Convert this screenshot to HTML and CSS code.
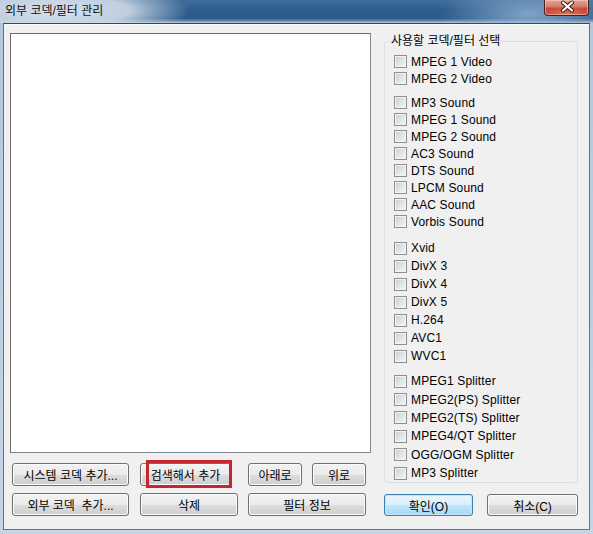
FILE: index.html
```html
<!DOCTYPE html>
<html lang="ko">
<head>
  <meta charset="UTF-8" />
  <title>외부 코덱/필터 관리</title>
  <link rel="stylesheet" href="styles.css">
</head>
<body>
  <div class="window">
    <div class="titlebar">
      <span class="title">외부 코덱/필터 관리</span>
      <!-- 닫기 버튼 -->
      <div class="close">
        <svg width="45" height="16" viewBox="0 0 45 16">
          <path d="M18 3.5 L27 11.5 M27 3.5 L18 11.5" stroke="#3b1512" stroke-width="4" stroke-linecap="round" fill="none"/>
          <path d="M18 3.5 L27 11.5 M27 3.5 L18 11.5" stroke="#fff" stroke-width="2.2" stroke-linecap="round" fill="none"/>
        </svg>
      </div>
    </div>
    <div class="frame">
      <div class="client">
        <div class="left">
          <div class="list"></div>
          <div class="btn-row">
            <button class="btn w117">시스템 코덱 추가...</button>
            <button class="btn w91 gap11 marked"><span class="mark"></span>검색해서 추가</button>
            <button class="btn w54 gap17">아래로</button>
            <button class="btn w54 gap10">위로</button>
          </div>
          <div class="btn-row row2">
            <button class="btn w117">외부 코덱  추가...</button>
            <button class="btn w98 gap11">삭제</button>
            <button class="btn w118 gap10">필터 정보</button>
          </div>
        </div>

        <div class="right">
          <fieldset class="group">
            <legend>사용할 코덱/필터 선택</legend>
            <div class="checks">
              <div class="grp">
                <label class="item"><span class="cb"></span>MPEG 1 Video</label>
                <label class="item"><span class="cb"></span>MPEG 2 Video</label>
              </div>
              <div class="grp">
                <label class="item"><span class="cb"></span>MP3 Sound</label>
                <label class="item"><span class="cb"></span>MPEG 1 Sound</label>
                <label class="item"><span class="cb"></span>MPEG 2 Sound</label>
                <label class="item"><span class="cb"></span>AC3 Sound</label>
                <label class="item"><span class="cb"></span>DTS Sound</label>
                <label class="item"><span class="cb"></span>LPCM Sound</label>
                <label class="item"><span class="cb"></span>AAC Sound</label>
                <label class="item"><span class="cb"></span>Vorbis Sound</label>
              </div>
              <div class="grp tall video">
                <label class="item"><span class="cb"></span>Xvid</label>
                <label class="item"><span class="cb"></span>DivX 3</label>
                <label class="item"><span class="cb"></span>DivX 4</label>
                <label class="item"><span class="cb"></span>DivX 5</label>
                <label class="item"><span class="cb"></span>H.264</label>
                <label class="item"><span class="cb"></span>AVC1</label>
                <label class="item"><span class="cb"></span>WVC1</label>
              </div>
              <div class="grp taller">
                <label class="item"><span class="cb"></span>MPEG1 Splitter</label>
                <label class="item"><span class="cb"></span>MPEG2(PS) Splitter</label>
                <label class="item"><span class="cb"></span>MPEG2(TS) Splitter</label>
                <label class="item"><span class="cb"></span>MPEG4/QT Splitter</label>
                <label class="item"><span class="cb"></span>OGG/OGM Splitter</label>
                <label class="item"><span class="cb"></span>MP3 Splitter</label>
              </div>
            </div>
          </fieldset>
          <div class="ok-row">
            <button class="btn default w89">확인(O)</button>
            <button class="btn w91">취소(C)</button>
          </div>
        </div>
      </div>
    </div>
  </div>
</body>
</html>
```

FILE: styles.css
```css
* { box-sizing: border-box; }
body { margin: 0; width: 593px; height: 534px; overflow: hidden; font-family: "Liberation Sans", "Noto Sans CJK KR", sans-serif; font-size: 12px; color: #000; background: #bccfe2; }

.window { height: 534px; display: flex; flex-direction: column; }

/* 타이틀바 */
.titlebar {
  position: relative; height: 23px; padding-left: 5px; line-height: 23px; color: #111;
  background:
    radial-gradient(ellipse 135px 28px at 55px 11px, rgba(214,225,237,1) 0%, rgba(205,218,232,0.9) 55%, rgba(200,214,230,0) 100%),
    radial-gradient(ellipse 90px 30px at 530px 14px, rgba(150,183,214,0.8), rgba(150,183,214,0) 100%),
    linear-gradient(to bottom, #416f9d 0%, #2d5b8b 45%, #2c5a8a 80%, #6f92b6 92%, #b8cbe0 100%);
}
.title { font-size: 12px; }
.close {
  position: absolute; left: 544px; top: 0; width: 45px; height: 16px;
  border: 1px solid #4a1f1c; border-top: none; border-radius: 0 0 4px 4px;
  background: radial-gradient(ellipse 30px 10px at 22px 14px, rgba(232,120,90,0.9), rgba(232,120,90,0) 100%),
              linear-gradient(to bottom, #e2a597 0%, #d27a69 45%, #c0412f 55%, #b9382a 100%);
  box-shadow: inset 0 0 0 1px rgba(255,220,210,0.5);
}
.close svg { display: block; margin-top: -1px; }

.frame { flex: 1; display: flex; padding: 0 3px 4px 3px; background: linear-gradient(to bottom, #b4c8dd, #c3d5e6); }
.client {
  flex: 1; display: flex; gap: 13px; padding-left: 6px;
  background: #f0f0f0; border: 1px solid #5f7389; border-top-color: #34495f;
  box-shadow: inset 0 1px 0 #fafafa;
}

.left { width: 361px; display: flex; flex-direction: column; }
.list { height: 420px; margin-top: 9px; background: #fff; border: 1px solid #828790; border-top-color: #6d6d6d; border-left-color: #6d6d6d; }

.btn-row { display: flex; margin-top: 10px; padding-left: 2px; }
.btn-row.row2 { margin-top: 7px; }

.btn {
  position: relative; height: 23px; padding: 0; font: inherit; color: #000; white-space: pre;
  border: 1px solid #707070; border-radius: 3px;
  background: linear-gradient(to bottom, #f2f2f2 0%, #ebebeb 50%, #dddddd 51%, #cfcfcf 100%);
  box-shadow: inset 0 0 0 1px #fbfbfb;
}
.btn.default {
  border-color: #3c7fb1;
  background: linear-gradient(to bottom, #eaf6fd 0%, #d9f0fc 50%, #bee6fd 51%, #a7d9f5 100%);
  box-shadow: inset 0 0 0 1px #c4e6f8;
}
.w54 { width: 54px; }
.w89 { width: 89px; }
.w91 { width: 91px; }
.w98 { width: 98px; }
.w117 { width: 117px; }
.w118 { width: 118px; }
.gap10 { margin-left: 10px; }
.gap11 { margin-left: 11px; }
.gap17 { margin-left: 17px; }

/* 빨간 강조 상자 */
.mark { position: absolute; left: 5px; right: -2px; top: -4px; bottom: -3px; border: 3px solid #c8262e; }

.right { width: 194px; display: flex; flex-direction: column; }
.group { height: 449px; margin: 10px 0 0; padding: 0; border: 1px solid #d5dfe5; border-radius: 3px; }
.group legend { margin-left: 5px; padding: 0 1px; line-height: 14px; font-size: 12px; }
.checks { padding: 5px 0 0 9px; }
.grp + .grp { margin-top: 7px; }
.grp.video { margin-top: 9px; }
.item { display: flex; align-items: center; gap: 4px; height: 17px; letter-spacing: 0.15px; }
.grp.tall .item { height: 18px; }
.grp.taller .item { height: 18.4px; }
.cb {
  width: 13px; height: 13px; border: 1px solid #8f8f8f;
  background: linear-gradient(135deg, #c9ccd0 0%, #e3e5e8 55%, #f7f7f7 100%);
  box-shadow: inset 0 0 0 1px #f4f4f4;
}

.ok-row { display: flex; justify-content: space-between; margin-top: 11px; }
.ok-row .btn { height: 22px; }
```
